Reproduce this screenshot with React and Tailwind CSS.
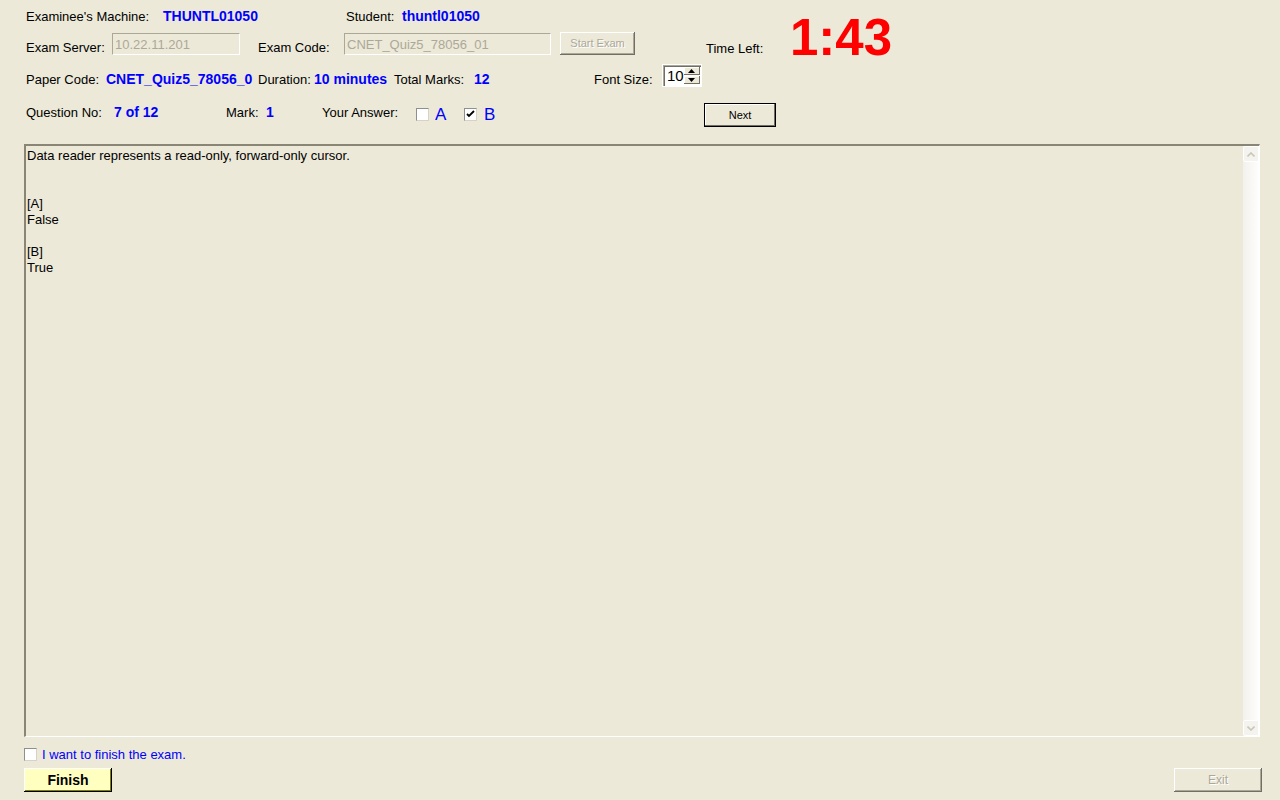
const font = { fontFamily: '"Liberation Sans", Arial, sans-serif' }

function Sunken({ className = '', children }) {
  return (
    <div className={`border-t border-l border-[#aca899] border-r border-b border-r-white border-b-white ${className}`}>
      {children}
    </div>
  )
}

function DisabledButton({ label, className = '' }) {
  return (
    <div
      className={`flex items-center justify-center bg-[#ece9d8] text-[#aca899] [text-shadow:1px_1px_0_#fff] shadow-[inset_-1px_-1px_#716f64,inset_1px_1px_#fff,inset_-2px_-2px_#aca899] ${className}`}
    >
      {label}
    </div>
  )
}

function Check({ checked }) {
  return (
    <div className="w-[13px] h-[13px] shrink-0 bg-white border border-t-[#8e8f8f] border-l-[#8e8f8f] border-r-[#d5d3c8] border-b-[#d5d3c8] flex items-center justify-center">
      {checked && (
        <svg width="9" height="9" viewBox="0 0 9 9">
          <path d="M1 4 L3 6 L8 1" stroke="#000" strokeWidth="1.8" fill="none" />
        </svg>
      )}
    </div>
  )
}

function Arrow({ up }) {
  return (
    <svg width="7" height="4" viewBox="0 0 7 4">
      <path d={up ? 'M3.5 0 L7 4 L0 4 Z' : 'M0 0 L7 0 L3.5 4 Z'} fill="#000" />
    </svg>
  )
}

export default function App() {
  return (
    <div style={font} className="w-[1280px] h-[800px] bg-[#ece9d8] text-[13px] text-black overflow-hidden px-[24px] leading-none">
      {/* Haut: machine / serveur + chrono */}
      <div className="flex items-start h-[55px]">
        <div className="w-[682px]">
          <div className="flex items-center h-[20px] mt-[6px] pl-[2px]">
            <span className="w-[137px]">Examinee's Machine:</span>
            <span className="w-[183px] text-[#0000ff] font-bold text-[14px]">THUNTL01050</span>
            <span className="w-[56px]">Student:</span>
            <span className="text-[#0000ff] font-bold text-[14px]">thuntl01050</span>
          </div>
          <div className="flex items-start h-[23px] mt-[6px]">
            <span className="w-[88px] pl-[2px] pt-[9px]">Exam Server:</span>
            <Sunken className="w-[128px] h-[22px] mt-[1px] px-[2px] pt-[4px] text-[#aca899]">10.22.11.201</Sunken>
            <span className="w-[86px] ml-[18px] pt-[9px]">Exam Code:</span>
            <Sunken className="w-[207px] h-[22px] mt-[1px] px-[2px] pt-[4px] text-[#aca899]">CNET_Quiz5_78056_01</Sunken>
            <DisabledButton label="Start Exam" className="w-[75px] h-[23px] ml-[9px] text-[11px]" />
          </div>
        </div>
        <div className="flex items-start">
          <span className="w-[84px] mt-[42px]">Time Left:</span>
          <span className="mt-[12px] text-[#ff0000] font-bold text-[51px] leading-none">1:43</span>
        </div>
      </div>

      {/* Code papier / durée / taille */}
      <div className="flex items-start h-[23px] mt-[9px] pl-[2px]">
        <span className="w-[80px] pt-[9px]">Paper Code:</span>
        <span className="w-[152px] pt-[8px] text-[#0000ff] font-bold text-[14px] whitespace-nowrap">CNET_Quiz5_78056_0</span>
        <span className="w-[56px] pt-[9px]">Duration:</span>
        <span className="w-[80px] pt-[8px] text-[#0000ff] font-bold text-[14px]">10 minutes</span>
        <span className="w-[80px] pt-[9px]">Total Marks:</span>
        <span className="w-[120px] pt-[8px] text-[#0000ff] font-bold text-[14px]">12</span>
        <span className="w-[68px] pt-[9px]">Font Size:</span>
        <div className="w-[40px] h-[23px] bg-white border border-white shadow-[inset_1px_1px_#aca899,inset_2px_2px_#716f64] flex items-center pl-[4px] pr-[2px]">
          <span className="flex-1 text-[15px]">10</span>
          <div className="flex flex-col gap-[1px]">
            <div className="w-[16px] h-[8px] bg-[#ece9d8] flex items-center justify-center shadow-[inset_-1px_-1px_#716f64,inset_1px_1px_#fff]"><Arrow up /></div>
            <div className="w-[16px] h-[8px] bg-[#ece9d8] flex items-center justify-center shadow-[inset_-1px_-1px_#716f64,inset_1px_1px_#fff]"><Arrow /></div>
          </div>
        </div>
      </div>

      {/* Question */}
      <div className="flex items-start h-[24px] mt-[16px] pl-[2px]">
        <span className="w-[88px] pt-[3px]">Question No:</span>
        <span className="w-[112px] pt-[2px] text-[#0000ff] font-bold text-[14px]">7 of 12</span>
        <span className="w-[40px] pt-[3px]">Mark:</span>
        <span className="w-[56px] pt-[2px] text-[#0000ff] font-bold text-[14px]">1</span>
        <span className="w-[94px] pt-[3px]">Your Answer:</span>
        <div className="w-[288px] flex items-center pt-[3px]">
          <Check />
          <span className="ml-[6px] w-[29px] text-[#0000ff] text-[17px]">A</span>
          <Check checked />
          <span className="ml-[7px] text-[#0000ff] text-[17px]">B</span>
        </div>
        <div className="w-[72px] h-[24px] bg-[#ece9d8] border border-black shadow-[inset_-1px_-1px_#716f64,inset_1px_1px_#fff] flex items-center justify-center text-[11px]">
          Next
        </div>
      </div>

      {/* Zone de texte */}
      <div className="flex h-[593px] mt-[17px] w-[1236px] border-t-2 border-l-2 border-t-[#8a8676] border-l-[#8a8676] border-r border-b border-r-white border-b-white">
        <div className="flex-1 pl-[1px] pt-[2px] leading-[16px] text-[13px]">
          <div>Data reader represents a read-only, forward-only cursor.</div>
          <div className="h-[16px]" />
          <div className="h-[16px]" />
          <div>[A]</div>
          <div>False</div>
          <div className="h-[16px]" />
          <div>[B]</div>
          <div>True</div>
        </div>
        <div className="w-[16px] flex flex-col bg-gradient-to-r from-[#f3f1ec] to-[#fefefe]">
          <div className="w-[16px] h-[16px] rounded-[2px] bg-[#f4f3ee] border border-white flex items-center justify-center">
            <svg width="8" height="5" viewBox="0 0 8 5"><path d="M0.5 4.5 L4 1 L7.5 4.5" stroke="#c9c7ba" strokeWidth="1.6" fill="none" /></svg>
          </div>
          <div className="flex-1" />
          <div className="w-[16px] h-[16px] rounded-[2px] bg-[#f4f3ee] border border-white flex items-center justify-center">
            <svg width="8" height="5" viewBox="0 0 8 5"><path d="M0.5 0.5 L4 4 L7.5 0.5" stroke="#c9c7ba" strokeWidth="1.6" fill="none" /></svg>
          </div>
        </div>
      </div>

      {/* Bas */}
      <div className="flex items-center h-[13px] mt-[11px]">
        <Check />
        <span className="ml-[5px] text-[#0000ff]">I want to finish the exam.</span>
      </div>
      <div className="flex justify-between mt-[7px]">
        <div className="w-[88px] h-[24px] bg-[#ffffc0] shadow-[inset_-1px_-1px_#000,inset_1px_1px_#fff,inset_-2px_-2px_#808000] flex items-center justify-center font-bold text-[14px]">
          Finish
        </div>
        <DisabledButton label="Exit" className="w-[88px] h-[24px] mr-[-6px] text-[12px]" />
      </div>
    </div>
  )
}
